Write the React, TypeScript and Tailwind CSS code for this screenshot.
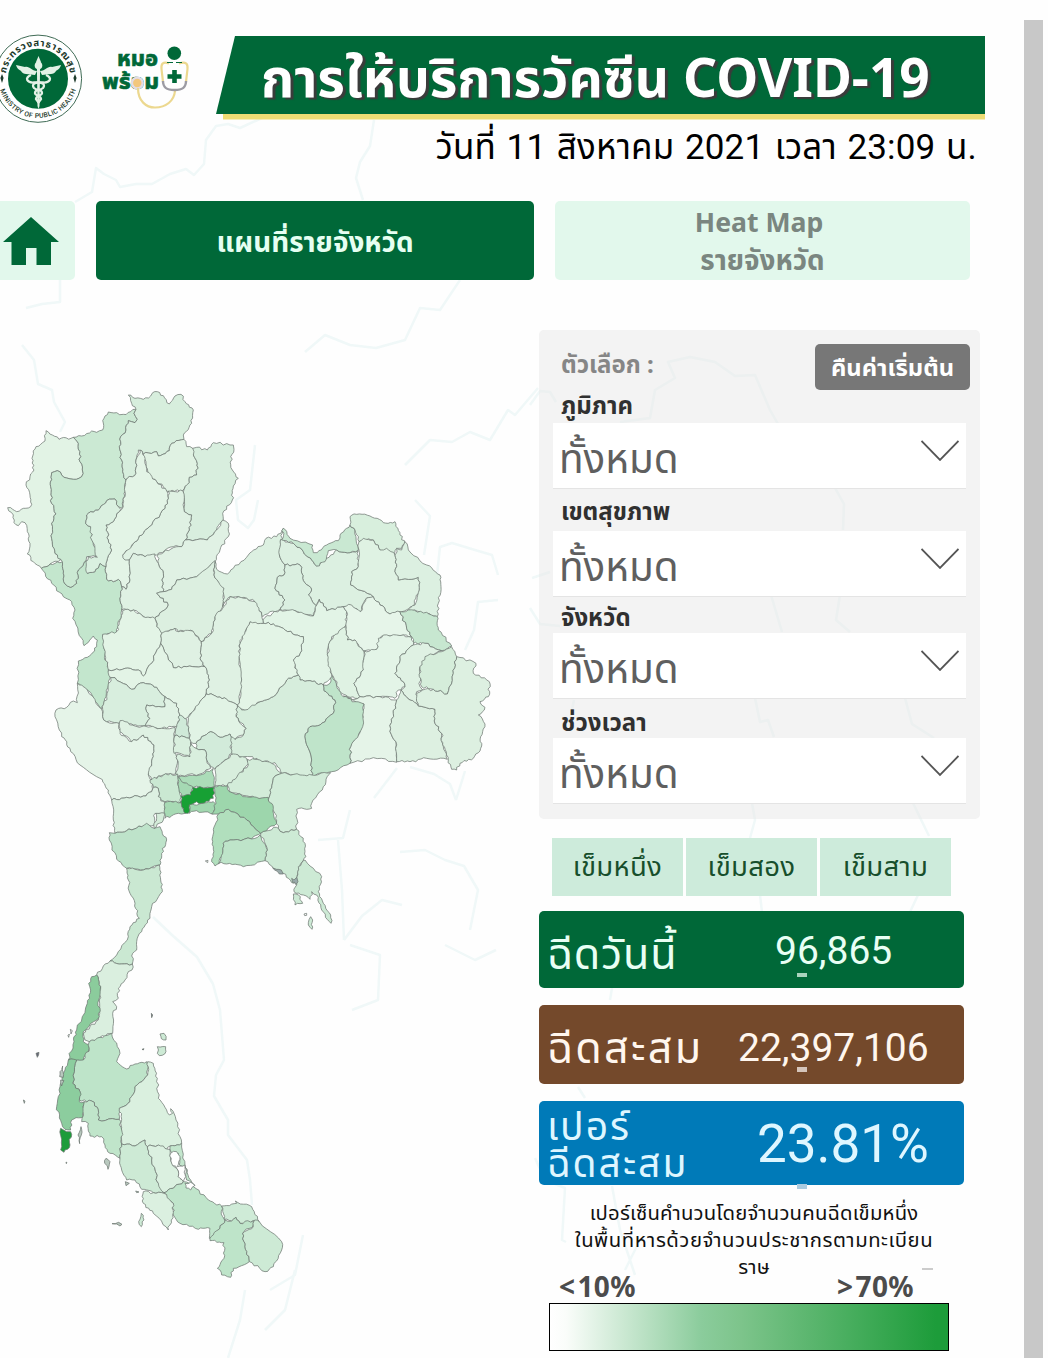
import React from 'react';

type Region = { fill: string; pts: string };
type Group = { origin: [number, number]; regions: Region[] };

// Three map units per pixel, each group has its own origin on the page
const GROUPS: Group[] = [
  {
    origin: [0, 380],
    regions: [
      // Mae Hong Son
      { fill: '#e2f3e5', pts: '138,152 157,165 177,178 220,172 235,190 240,215 240,245 247,270 245,290 220,298 200,294 185,285 172,272 155,278 152,320 155,370 168,402 155,430 157,485 165,520 182,540 150,552 124,565 100,545 82,522 90,490 82,455 75,428 65,425 55,437 42,428 40,405 23,383 50,395 70,385 92,380 90,345 78,315 90,290 102,270 96,235 108,200 135,183' },
      // Tak
      { fill: '#c3e6cd', pts: '124,565 150,552 187,545 190,580 195,612 212,622 230,610 235,570 252,548 262,540 262,580 285,575 300,550 318,560 320,598 340,605 355,598 365,620 360,655 365,690 355,740 350,760 308,765 315,825 322,860 330,895 318,950 305,988 262,930 232,910 235,843 268,828 290,800 292,780 280,768 252,797 245,775 218,715 225,690 215,665 190,650 155,610' },
      // Chiang Mai
      { fill: '#cbe9d3', pts: '220,172 245,168 275,153 290,157 308,150 312,115 325,96 350,98 370,103 392,95 408,88 402,100 412,118 405,128 385,122 378,150 362,170 358,200 365,240 368,275 378,300 372,340 366,385 355,380 345,357 320,362 300,385 260,405 257,430 272,440 278,480 290,515 288,530 260,530 252,548 235,570 230,610 212,622 195,612 190,580 187,545 165,520 157,485 155,430 168,402 155,370 152,320 155,278 172,272 185,285 200,294 220,298 245,290 247,270 240,245 240,215 235,190' },
      // Chiang Rai
      { fill: '#d7eedd', pts: '385,45 405,55 430,58 452,48 458,38 472,35 490,47 508,72 525,48 543,43 555,65 580,90 575,130 550,165 552,178 515,190 508,212 475,228 470,215 430,222 425,212 415,210 408,240 408,280 378,300 368,275 365,240 358,200 362,170 378,150 385,122 405,128 412,118 402,100 408,88 395,70' },
      // Phayao
      { fill: '#e0f2e3', pts: '430,222 470,215 475,228 508,212 515,190 552,178 560,200 578,205 588,210 580,225 592,250 590,285 568,292 568,308 548,332 500,333 490,320 470,305 450,290 438,260' },
      // Nan
      { fill: '#d8eede', pts: '578,205 590,202 622,210 640,188 700,195 702,208 692,230 697,270 715,295 700,318 697,360 668,400 670,420 650,450 622,480 556,480 568,450 575,405 553,395 550,335 568,308 568,292 590,285 592,250 580,225' },
      // Phrae
      { fill: '#dff1e3', pts: '505,333 548,332 553,395 575,405 568,450 556,480 545,500 520,500 470,525 435,530 400,520 388,540 370,542 365,528 400,490 430,460 455,435 495,385 505,355' },
      // Lampang
      { fill: '#e3f4e6', pts: '420,210 428,215 435,250 440,275 470,305 500,333 505,355 495,385 455,435 430,460 400,490 368,525 375,540 388,540 390,600 378,628 365,620 355,598 340,605 320,598 318,560 330,520 335,510 325,480 318,435 340,425 358,395 370,380 375,335 378,300 408,280 408,240' },
      // Lamphun
      { fill: '#daf0e0', pts: '345,357 355,380 362,388 358,395 340,425 318,435 325,480 335,510 330,520 318,560 300,550 285,575 262,580 258,545 265,530 292,532 275,480 272,440 257,430 260,405 300,385 320,362' },
      // Uttaradit
      { fill: '#e0f1e4', pts: '475,522 520,503 545,500 556,480 622,480 650,450 668,420 685,430 685,470 660,510 645,545 620,568 590,590 530,600 515,628 490,635 485,600 490,580 475,550' },
      // Sukhothai
      { fill: '#dff1e3', pts: '388,540 400,520 435,530 465,522 475,550 490,580 485,600 490,635 470,640 505,675 500,685 468,710 465,716 435,713 400,690 365,690 360,655 365,620 378,628 390,600' },
      // Phitsanulok
      { fill: '#dcefe0', pts: '490,635 515,628 530,600 590,590 645,542 642,585 672,625 668,680 645,710 635,760 603,785 578,753 535,755 525,745 485,760 470,740 465,716 468,710 500,685 505,675 470,640' },
    ],
  },
  {
    origin: [240, 500],
    regions: [
      // Loei
      { fill: '#dcf0e1', pts: '-75,185 -70,208 -38,222 -20,205 25,165 35,155 70,135 78,115 110,110 130,85 122,130 118,165 135,195 132,225 112,232 105,265 135,300 120,328 90,335 68,350 65,345 45,305 20,295 -30,290 -52,320 -48,265 -78,225' },
      // Udon Thani
      { fill: '#dcf0e1', pts: '122,118 160,130 190,155 215,180 230,198 260,175 290,150 330,158 355,152 355,200 335,215 332,255 345,262 400,290 375,300 362,335 330,318 310,320 260,332 238,298 230,318 205,285 215,270 188,235 180,195 135,195 118,165' },
      // Nong Bua Lamphu
      { fill: '#daefe0', pts: '135,195 180,195 188,235 215,270 205,285 230,318 220,348 190,345 165,332 120,328 135,300 105,265 112,232 132,225' },
      // Nong Khai
      { fill: '#c9e8d2', pts: '130,85 150,115 218,135 220,158 232,158 260,135 295,122 300,105 330,75 345,90 355,150 330,158 290,150 265,152 255,185 230,198 215,180 190,155 160,130 125,120' },
      // Bueng Kan
      { fill: '#d8efdd', pts: '330,75 330,50 350,43 390,48 430,68 465,65 480,105 495,130 485,145 470,145 462,165 420,150 400,120 370,120 357,125 345,90' },
      // Sakon Nakhon
      { fill: '#dff2e3', pts: '357,125 370,115 400,120 420,150 440,145 465,165 470,200 465,215 475,240 535,232 538,270 520,320 485,335 450,342 420,315 400,290 345,262 332,255 335,215 355,200' },
      // Nakhon Phanom
      { fill: '#dcf0e1', pts: '495,125 505,150 560,195 600,225 603,260 595,310 592,350 560,340 505,330 525,315 538,270 535,232 475,240 465,215 470,200 465,165 470,145 485,150' },
      // Khon Kaen
      { fill: '#e2f4e6', pts: '75,352 120,330 165,332 220,348 238,298 260,332 310,320 320,335 318,375 305,400 275,410 262,450 272,500 275,530 250,555 210,542 180,540 170,515 160,480 180,460 190,410 165,405 130,385 100,372 70,370' },
      // Kalasin
      { fill: '#e6f5e9', pts: '310,320 335,315 362,335 378,295 400,290 420,315 450,342 480,335 500,385 515,410 490,405 425,408 410,448 370,453 345,420 322,420 318,380 320,335' },
      // Mukdahan
      { fill: '#c7e7d0', pts: '480,335 505,330 560,337 590,348 595,390 635,438 605,452 555,430 520,430 515,410 500,385' },
      // Maha Sarakham
      { fill: '#dff2e3', pts: '318,380 322,420 345,420 372,455 370,510 342,550 360,590 345,595 305,580 280,530 265,490 265,435 280,410' },
      // Roi Et
      { fill: '#e3f4e7', pts: '372,453 410,448 415,415 430,405 490,405 515,412 520,435 480,470 478,490 465,520 490,545 495,560 475,570 465,595 420,590 360,590 342,550 370,510' },
      // Yasothon
      { fill: '#dff1e3', pts: '520,435 555,430 605,452 570,470 540,500 540,560 548,570 530,575 535,615 510,600 483,570 495,560 490,545 465,520 478,490 480,470' },
      // Amnat Charoen
      { fill: '#d5edda', pts: '555,470 605,455 635,440 650,470 640,520 622,582 580,568 545,560 538,530 540,500' },
      // Nakhon Ratchasima
      { fill: '#d6eddc', pts: '-8,615 5,630 60,605 100,590 140,540 175,525 180,540 210,542 250,555 252,572 285,600 280,640 240,675 210,680 195,710 215,780 215,828 205,830 125,820 105,788 70,785 30,770 0,770 -25,760 -30,702 -15,718 10,705 18,685 -12,650' },
      // Chaiyaphum
      { fill: '#e3f4e6', pts: '30,365 70,370 100,372 130,385 165,405 190,410 180,460 160,480 175,525 140,540 100,590 60,605 15,630 -8,615 -2,600 5,540 -3,470 0,430 10,400' },
      // Surin
      { fill: '#e5f4e8', pts: '310,588 345,598 360,590 420,590 470,600 460,640 450,695 468,725 470,787 400,773 330,790 332,740 362,690 372,612' },
      // Sisaket
      { fill: '#ddf0e1', pts: '483,570 510,600 535,618 585,628 585,670 605,700 610,740 622,778 560,775 510,785 470,785 468,725 450,695 460,640 470,600' },
      // Ubon Ratchathani
      { fill: '#ddf0e1', pts: '650,470 708,490 700,520 748,545 745,590 720,605 735,622 715,645 735,672 722,710 722,745 700,775 660,790 650,810 635,808 625,780 608,735 605,700 585,670 585,628 535,618 530,580 548,570 580,568 622,582 640,520' },
      // Buriram
      { fill: '#bfe4ca', pts: '250,555 270,550 278,528 290,560 310,590 345,605 372,612 368,680 332,740 330,790 275,815 215,828 215,780 195,710 210,680 240,675 280,640 285,600 252,572' },
    ],
  },
  {
    origin: [0, 600],
    regions: [
      // Kanchanaburi
      { fill: '#e5f4e8', pts: '232,250 262,270 305,328 308,350 320,365 358,370 360,400 395,425 430,405 462,435 462,455 455,490 455,510 445,525 460,550 455,575 430,588 380,592 335,600 325,570 300,535 240,495 210,445 185,410 165,350 168,330 200,322 220,303 232,308' },
      // Phetchabun
      { fill: '#dff1e3', pts: '603,125 635,100 645,50 668,25 690,-10 740,-5 765,5 785,45 790,70 750,65 735,95 720,130 717,170 725,240 718,300 712,315 680,298 640,285 618,282 628,240 615,200 600,175' },
      // Kamphaeng Phet
      { fill: '#e3f4e6', pts: '308,103 350,95 360,60 368,32 400,30 430,50 465,55 470,80 485,100 482,130 455,190 430,228 415,210 375,205 325,210 315,165' },
      // Phichit
      { fill: '#dff1e3', pts: '485,100 525,85 535,95 578,93 603,125 600,175 615,200 560,200 520,203 482,130' },
      // Nakhon Sawan
      { fill: '#e3f4e6', pts: '325,210 375,205 415,210 430,228 455,190 482,130 520,203 560,200 615,200 628,240 618,282 600,305 565,350 555,358 540,350 535,335 530,310 495,290 470,262 430,248 395,268 345,233 332,233' },
      // Uthai Thani
      { fill: '#d8eede', pts: '332,233 345,233 395,268 430,248 470,262 495,290 495,320 440,315 440,335 450,355 435,378 400,375 360,370 320,365 308,350 308,328 320,290' },
      // Chai Nat
      { fill: '#e0f2e4', pts: '495,290 530,310 535,335 540,350 530,380 485,385 435,378 450,355 440,335 440,315 495,320' },
      // Suphan Buri
      { fill: '#dff1e3', pts: '360,362 375,365 405,378 485,385 525,382 522,440 532,490 527,522 490,525 455,540 445,525 455,490 462,455 462,435 430,405 395,425 360,395' },
      // Lop Buri
      { fill: '#e1f3e5', pts: '565,352 600,305 618,282 640,285 680,298 712,315 708,350 738,385 730,405 705,418 690,402 660,412 632,395 605,410 588,430 572,425 568,415' },
      // Sing Buri
      { fill: '#cfe9d8', pts: '530,380 540,345 560,358 565,390 568,415 545,408 524,408' },
      // Ang Thong
      { fill: '#d9efde', pts: '524,408 545,408 568,415 572,435 570,470 545,462 522,460' },
      // Saraburi
      { fill: '#d2ebda', pts: '588,430 605,410 632,395 660,412 690,402 695,460 670,485 645,508 632,500 620,480 615,450 588,445' },
      // Ayutthaya
      { fill: '#d9efde', pts: '532,462 570,470 572,428 588,445 615,450 620,480 632,505 600,522 530,530' },
      // Nakhon Nayok
      { fill: '#d8eedd', pts: '645,508 670,485 700,462 740,475 748,490 710,535 685,555 645,558' },
      // Nakhon Pathom
      { fill: '#cae8d2', pts: '450,540 490,525 533,522 538,575 543,608 495,605 475,590 475,565 460,562' },
      // Ratchaburi
      { fill: '#dcf0e1', pts: '335,600 380,592 430,588 455,575 460,562 475,565 475,590 495,610 495,640 465,640 463,675 425,680 380,692 345,700 340,660' },
      // Phetchaburi
      { fill: '#bee3ca', pts: '328,698 345,700 380,692 425,680 440,670 463,685 480,680 500,720 485,760 480,795 430,810 380,805 350,778 328,720' },
      // Pathum Thani
      { fill: '#abdcb8', pts: '535,530 600,525 640,505 643,560 580,562 540,545' },
      // Nonthaburi
      { fill: '#a5d9b3', pts: '535,530 545,545 580,562 575,590 545,590 538,575' },
      // Samut Sakhon
      { fill: '#a7dab4', pts: '495,607 543,608 555,640 535,640 495,655' },
      // Samut Songkhram
      { fill: '#d5edda', pts: '468,640 495,640 490,660 463,685' },
      // Samut Prakan
      { fill: '#a2d8b0', pts: '568,615 605,610 640,605 648,625 640,642 590,632 568,640' },
      // Bangkok
      { fill: '#17a034', pts: '543,588 572,585 578,562 643,562 640,595 605,610 590,605 568,615 565,640 555,640 543,605' },
    ],
  },
  {
    origin: [140, 740],
    regions: [
      // Prachin Buri
      { fill: '#d3ecd9', pts: '262,135 290,112 325,75 322,58 360,60 395,70 425,100 400,115 390,150 385,178 365,175 330,170 268,155' },
      // Sa Kaeo
      { fill: '#d2ecd9', pts: '425,100 480,105 515,105 572,98 550,140 515,190 515,205 470,208 470,268 430,278 415,265 405,220 395,205 385,178 390,150 400,115' },
      // Chanthaburi
      { fill: '#cdead5', pts: '362,280 410,262 415,265 430,278 470,268 495,310 498,350 480,375 472,415 462,430 430,400 400,385 375,362 382,330' },
      // Chachoengsao
      { fill: '#9dd6ac', pts: '222,140 262,138 268,155 330,172 385,172 400,205 410,250 362,280 320,240 265,208 235,222 215,222 228,190' },
      // Chon Buri
      { fill: '#b1dfbd', pts: '235,222 265,208 320,240 362,280 335,297 270,300 250,310 248,340 238,370 225,378 215,365 220,320 218,290 225,255' },
      // Rayong
      { fill: '#bee4c9', pts: '250,310 270,300 335,297 360,285 382,330 375,362 310,380 260,372 235,370 248,340' },
      // Trat
      { fill: '#cdead5', pts: '495,360 545,410 535,455 550,490 572,525 573,550 545,510 530,465 515,455 510,478 490,465 462,455 470,420 475,380' },
      { fill: '#cdead5', pts: '460,462 475,465 488,490 465,495' },
      { fill: '#cdead5', pts: '505,548 512,530 518,540 516,568 505,555' },
      { fill: '#9aa', pts: '455,415 462,420 470,412 474,425 468,434 463,426 458,428' },
      { fill: '#9aa', pts: '398,384 410,388 424,390 430,402 418,402 412,394' },
      { fill: '#fff', pts: '492,522 500,520 500,526 494,527' },
      { fill: '#fff', pts: '196,363 204,361 203,368' },
    ],
  },
  {
    origin: [0, 860],
    regions: [
      // Prachuap Khiri Khan
      { fill: '#cae8d2', pts: '380,25 430,30 478,15 482,60 487,95 455,140 450,175 425,215 410,245 410,270 398,280 397,312 365,312 330,303 350,285 385,230 390,200 418,175 405,130 390,100 385,60' },
      // Chumphon
      { fill: '#daefdf', pts: '330,303 365,312 397,312 396,330 385,335 375,360 355,385 355,415 338,425 350,440 338,460 338,520 300,532 268,545 255,540 250,520 270,500 295,480 298,420 302,380 290,345 310,318' },
      // Ranong
      { fill: '#8bcc9c', pts: '290,345 302,380 296,420 298,470 250,515 250,545 268,555 265,575 250,600 205,600 222,545 230,510 262,430 272,390 266,370 275,350' },
      { fill: '#cdead5', pts: '480,522 492,520 498,540 484,536' },
      { fill: '#cdead5', pts: '472,560 497,560 494,582 478,587 472,580' },
      { fill: '#667', pts: '454,460 458,465 455,473' },
      { fill: '#667', pts: '108,580 117,577 112,592' },
      { fill: '#fff', pts: '211,508 217,512 213,522' },
      { fill: '#fff', pts: '204,526 208,522 206,532' },
      { fill: '#667', pts: '426,568 432,566 430,570' },
    ],
  },
  {
    origin: [20, 1020],
    regions: [
      // Surat Thani
      { fill: '#bee4c9', pts: '275,40 300,100 290,125 320,147 345,132 380,125 383,165 345,200 330,245 298,265 298,298 235,300 232,262 215,243 178,240 180,215 158,190 170,120 190,120 208,85 208,65 240,52' },
      // Phang Nga
      { fill: '#8ccd9e', pts: '145,120 170,120 158,190 180,215 178,245 193,245 190,290 155,300 152,330 135,328 125,310 110,260 120,200 135,150' },
      // Phuket
      { fill: '#1d9c3a', pts: '122,325 140,335 152,335 150,375 132,397 122,390' },
      // Nakhon Si Thammarat
      { fill: '#daf0df', pts: '383,125 400,130 412,175 415,235 435,262 448,285 458,280 452,266 466,290 480,350 485,370 450,378 440,390 415,375 382,380 375,360 345,378 305,372 305,298 298,265 330,245 345,200 383,165' },
      // Krabi
      { fill: '#c0e5ca', pts: '193,245 215,243 232,262 235,300 298,298 305,330 305,372 300,415 270,400 255,375 245,350 210,348 205,310 185,305' },
      // Trang
      { fill: '#cdead5', pts: '305,372 345,378 375,360 382,380 395,420 415,490 432,520 400,518 365,508 345,480 320,480 305,450 300,415' },
      // Phatthalung
      { fill: '#dbf0e0', pts: '382,380 415,375 450,388 452,420 470,445 475,470 490,485 465,500 432,518 415,490 395,420' },
      // Songkhla
      { fill: '#c3e6cd', pts: '450,378 485,370 495,435 512,480 525,497 500,480 495,440 478,435 475,400 452,395' },
      { fill: '#c0e5cb', pts: '432,518 465,500 490,485 520,500 565,540 605,558 608,590 615,600 600,625 575,655 568,655 570,625 535,628 480,610 460,585 460,550 445,540' },
      { fill: '#fff', pts: '452,400 470,395 480,410 472,440 495,435 497,470 490,485 475,470 470,445 455,430' },
      { fill: '#fff', pts: '495,490 512,487 524,497 512,510 498,504' },
      // Satun
      { fill: '#dbf0e0', pts: '370,515 400,518 432,520 460,550 458,585 445,630 400,580 370,550' },
      // Pattani
      { fill: '#cfebd7', pts: '605,558 650,550 646,543 695,560 718,605 700,602 690,615 660,610 648,592 635,603 612,598' },
      // Yala
      { fill: '#bee4c9', pts: '615,600 635,603 648,592 660,610 700,602 700,615 668,640 675,680 688,725 640,745 632,772 605,765 592,745 612,715 612,668 570,662 570,655 600,625' },
      // Narathiwat
      { fill: '#cdead5', pts: '704,600 718,605 785,665 785,690 760,740 735,755 688,725 675,680 668,640 700,620' },
      { fill: '#cdead5', pts: '364,580 372,600 364,620 356,605' },
      { fill: '#b8c8be', pts: '183,320 184,345 179,371 174,345' },
      { fill: '#b8c8be', pts: '258,415 270,425 264,448 254,430' },
      { fill: '#b8c8be', pts: '128,138 130,172 119,170 120,155' },
      { fill: '#b8c8be', pts: '122,180 132,182 125,198' },
      { fill: '#b8c8be', pts: '316,485 328,490 318,497' },
      { fill: '#b8c8be', pts: '276,611 296,607 306,613 300,618 290,612' },
      { fill: '#b8c8be', pts: '10,240 15,243 13,250' },
      { fill: '#b8c8be', pts: '138,426 141,428 139,431' },
      { fill: '#b8c8be', pts: '347,513 357,516 350,518' },
    ],
  },
];

const COUNTRY_LINES = [
  'M75 202 L92 192 L96 168 L104 174 L116 180 L120 187 L136 184 L152 184 L170 174 L186 169 L194 175 L204 164 L206 140 L216 126 L228 124 L240 128 L262 118',
  'M374 120 L370 146 L360 162 L356 178 L363 200',
  'M60 280 L60 302 L42 304 L26 308 M22 345 L34 360 L38 384 L52 390 L54 402 L65 422 L60 432',
  'M460 280 L440 310 L420 308 L405 340 L376 348 L350 345 L325 335 L305 352 M538 388 L515 415 L508 410 L490 440 L470 432 L452 442 L430 440 L405 465',
  'M255 445 L250 490 L236 500 L238 520 L248 528 L254 520 L258 500 M415 500 L430 516 L424 555 M437 575 L440 547 L452 543 L475 550 L492 555 L498 575',
  'M498 600 L478 602 L474 630 L465 650',
  'M530 405 L540 391 L550 392 L556 402 M620 422 L650 418 L655 390 L675 378 L668 362 L690 357 L715 362 L735 376 L755 375 L770 410 L778 424',
  'M532 578 L550 572 M530 608 L540 624 L560 626 M835 488 L844 504 L843 530 M771 595 L782 632 M840 595 L836 620 L850 632',
  'M574 700 L570 720 M755 698 L760 722 L768 720 L774 737 M905 698 L912 724 L934 738 M752 803 L755 820 L750 838 M913 803 L929 836 M760 895 L762 912 M918 895 L910 912',
  'M397 768 L374 798 M410 767 L434 774 L450 784 L456 800 M456 800 L465 771 M350 810 L343 838 L318 840 M338 840 L342 890 L344 940',
  'M153 917 L172 935 L197 957 L213 984 L220 1010 L224 1060 L216 1075 L214 1096 L228 1120 L228 1135 L247 1160 L250 1180 L252 1205',
  'M344 940 L362 916 L382 900 L402 905 M400 852 L425 850 L445 860 L464 866 L478 890 L470 930',
  'M303 1235 L295 1275 L270 1290 M295 1270 L285 1310 L265 1330 M245 1290 L240 1320 L228 1358',
  'M612 988 L610 1000 M578 1087 L585 1098 M535 1158 L545 1180 L565 1188 L562 1240 L566 1242 M612 1186 L620 1230 L635 1275 M625 1270 L640 1240',
  'M350 945 L380 955 L378 1000 L352 1010 M445 945 L475 960 L496 950',
];

// Small repeatable value in -0.5..0.5 from a point
const noise = (x: number, y: number) => {
  const v = Math.sin(x * 12.9898 + y * 78.233) * 43758.5453;
  return v - Math.floor(v) - 0.5;
};

// Breaks straight edges up so that the borders look natural. The offset only
// depends on the two end points, so neighbours get the same border.
const roughen = (pts: string) => {
  const p = pts.split(' ').map((s) => s.split(',').map(Number));
  const out: string[] = [];
  p.forEach((a, i) => {
    const b = p[(i + 1) % p.length];
    out.push(`${a[0]},${a[1]}`);
    const len = Math.hypot(b[0] - a[0], b[1] - a[1]);
    if (len < 14) return;
    const flip = a[0] > b[0] || (a[0] === b[0] && a[1] > b[1]);
    const [s, e] = flip ? [b, a] : [a, b];
    const n = Math.min(6, Math.floor(len / 7));
    const mid: string[] = [];
    for (let k = 1; k < n; k++) {
      const t = k / n;
      const x = s[0] + (e[0] - s[0]) * t;
      const y = s[1] + (e[1] - s[1]) * t;
      const d = noise(x, y) * 7.5;
      mid.push(`${(x - ((e[1] - s[1]) / len) * d).toFixed(1)},${(y + ((e[0] - s[0]) / len) * d).toFixed(1)}`);
    }
    out.push(...(flip ? mid.reverse() : mid));
  });
  return out.join(' ');
};

const ProvinceMap = () => (
  <svg width="500" height="920" viewBox="0 380 500 920" className="shrink-0">
    {GROUPS.map((g, i) => (
      <g key={i} transform={`translate(${g.origin[0]} ${g.origin[1]}) scale(0.33333)`}>
        {g.regions.map((r, j) => (
          <polygon key={j} points={roughen(r.pts)} fill={r.fill} stroke="#6c7671" strokeWidth="2.2" strokeLinejoin="round" />
        ))}
      </g>
    ))}
  </svg>
);

const Seal = () => (
  <svg width="84" height="92" viewBox="0 31 84 92" className="shrink-0">
    <defs>
      <path id="sealTop" d="M5.5 77.5 A32.5 32.5 0 0 1 70.5 77.5" />
      <path id="sealBottom" d="M-1.500 77.5 A39.5 39.5 0 0 0 77.5 77.5" />
    </defs>
    <circle cx="38" cy="77.7" r="43.6" fill="#fff" stroke="#3f6b55" strokeWidth="1" />
    <circle cx="38" cy="77.7" r="30" fill="#006838" />
    <text fill="#1d3a2b" fontSize="9.5" fontWeight="700" fontFamily="Noto Sans Thai, Noto Sans, sans-serif">
      <textPath href="#sealTop" startOffset="50%" textAnchor="middle" textLength="92">กระทรวงสาธารณสุข</textPath>
    </text>
    <text fill="#1d3a2b" fontSize="6.8" fontWeight="500" fontFamily="Roboto, sans-serif">
      <textPath href="#sealBottom" startOffset="50%" textAnchor="middle" textLength="101">MINISTRY OF PUBLIC HEALTH</textPath>
    </text>
    <path d="M2 73 l1.6 4 l-1.6 5 l-1.6 -5z M75 73 l1.6 4 l-1.6 5 l-1.6 -5z" fill="#1d3a2b" />
    {/* winged staff */}
    <g fill="#e3f1e6">
      <path d="M37 70 C31 70 30 65 25 66 L16 64 C17 68 20 69 21 70 C22 72 24 73 26 73 L35 74 Z" />
      <path d="M40 70 C46 70 47 65 52 66 L61 64 C60 68 57 69 56 70 C55 72 53 73 51 73 L42 74 Z" />
      <path d="M38.5 55 L41 61 L40 64 H37 L36 61 Z" />
      <circle cx="38.5" cy="64.5" r="3.8" />
      <path d="M36.9 66 H40.1 L39.5 105 L38.5 108 L37.5 105 Z" />
    </g>
    <g fill="none" stroke="#e3f1e6" strokeWidth="2.3">
      <path d="M31 74 C24 77 27 82 34 81.5 C42 81 46 83 43 87 C40 90 35 88 35 92 C35 95 41 94 41 98 L38 102" />
      <path d="M46 74 C53 77 50 82 43 81.5 C35 81 31 83 34 87 C37 90 42 88 42 92 C42 95 36 94 36 98 L39 102" />
    </g>
  </svg>
);

const MorPromLogo = () => (
  <svg width="90" height="68" viewBox="101 44 90 68" className="shrink-0">
    <g fill="#006838" stroke="#006838" strokeWidth="0.5" fontFamily="Noto Sans Thai, Noto Sans, sans-serif" fontWeight="800">
      <text x="117" y="66" fontSize="22" textLength="41" lengthAdjust="spacingAndGlyphs">หมอ</text>
      <text x="102" y="88.500" fontSize="21" textLength="57" lengthAdjust="spacingAndGlyphs">พร้อม</text>
    </g>
    <circle cx="174.3" cy="53.3" r="6.8" fill="#006838" />
    <circle cx="137.3" cy="83" r="5.4" fill="#f3c77c" stroke="#e2dce4" strokeWidth="2.4" />
    <path d="M138 88 C138 101 146 107.500 155 107.500 C166 107.500 174 101 175 91" fill="none" stroke="#ecd88f" strokeWidth="2.200" />
    <path d="M169 63.500 C163 61 161 64 161.500 69 L163 82 M179 63.500 C186 61 188 64 187.500 69 L186 82" fill="none" stroke="#ecd88f" strokeWidth="2.200" />
    <path d="M163 81 C163 88 167 90 174.500 90 C182 90 186 88 186 81" fill="none" stroke="#9c9ba3" strokeWidth="2.400" />
    <path d="M172.200 70 h4.600 v4.200 h4.700 v4.600 h-4.700 v4.200 h-4.600 v-4.200 h-4.700 v-4.600 h4.700z" fill="#006838" />
    <path d="M167 62.500 h6 M176 62.500 h6" stroke="#006838" strokeWidth="1.200" />
  </svg>
);

const FILTERS = [
  { label: 'ภูมิภาค', gap: 'h-[33px] pb-[2px]' },
  { label: 'เขตสุขภาพ', gap: 'h-[42px] pb-[4px]' },
  { label: 'จังหวัด', gap: 'h-[36px]' },
  { label: 'ช่วงเวลา', gap: 'h-[39px]' },
];

const SelectBox = () => (
  <button className="flex w-[413px] h-[66px] shrink-0 justify-between bg-white border-b border-[#e4e4e4] pl-[6px] pr-[7px]">
    <span className="text-[40.4px] leading-[74px] text-[#5f5f5f] whitespace-nowrap">ทั้งหมด</span>
    <svg width="38" height="22" viewBox="0 0 38 22" className="mt-[17px]">
      <path d="M0.500 1 L19 20 L37.500 1" fill="none" stroke="#555" strokeWidth="1.800" />
    </svg>
  </button>
);

const App = () => {
  return (
    <div className="relative flex w-[1048px] h-[1358px] overflow-hidden bg-[#fefefe] font-['Roboto','Noto_Sans_Thai','Noto_Sans',sans-serif]">
      <svg className="absolute left-0 top-0" width="1024" height="1358" fill="none" stroke="#f0f8f8" strokeWidth="2.500" strokeLinejoin="round">
        {COUNTRY_LINES.map((d) => <path key={d} d={d} />)}
      </svg>

      <main className="relative w-[1024px] shrink-0">
        {/* Header */}
        <header className="flex h-[124px] pt-[32px]">
          <Seal />
          <div className="pl-[17px] pt-[12px]"><MorPromLogo /></div>
          <div className="relative ml-[25px] mt-[4px] w-[769px] h-[84px]">
            <svg width="769" height="84" className="absolute inset-0">
              <path d="M7 75 H769 V83.500 H7z" fill="#eddc74" />
              <path d="M19 0 H769 V78 H0z" fill="#006838" />
            </svg>
            <h1 className="relative pl-[45px] text-[53.2px] leading-[82px] font-bold text-white whitespace-nowrap font-['Noto_Sans','Noto_Sans_Thai',sans-serif] [text-shadow:3px_2px_1px_#3b3b3b]">
              การให้บริการวัคซีน COVID-19
            </h1>
          </div>
        </header>
        <p className="h-[77px] pr-[47px] text-right text-[35px] leading-[47px] text-black whitespace-nowrap tracking-[0.15px] [word-spacing:1.8px]">
          วันที่ 11 สิงหาคม 2021 เวลา 23:09 น.
        </p>

        {/* Tabs */}
        <nav className="flex h-[79px] font-bold text-[27.8px] font-['Noto_Sans','Noto_Sans_Thai',sans-serif]">
          <button className="w-[75px] rounded-r-[5px] bg-[#e2f8ec]">
            <svg width="75" height="79" viewBox="0 0 75 79">
              <path d="M31 16 L59 41 H51 V64 H36.500 V47 H26 V64 H11.500 V41 H3z" fill="#006838" />
            </svg>
          </button>
          <button className="ml-[21px] w-[438px] rounded-[5px] bg-[#006838] text-[#e6fff2] leading-[80px]">แผนที่รายจังหวัด</button>
          <button className="ml-[21px] w-[415px] rounded-[5px] bg-[#e2f8ec] text-[#7a8680] leading-[37px]">
            <span className="block pt-[1px] pr-[7px] text-[26.6px]">Heat Map</span>
            <span className="block">รายจังหวัด</span>
          </button>
        </nav>

        <div className="flex mt-[50px]">
          <div className="w-[539px] pt-[50px]">
            <ProvinceMap />
          </div>

          <div className="w-[441px]">
            {/* Filters */}
            <section className="relative h-[489px] rounded-[5px] bg-[#e7e8e8]/50 pl-[14px] pt-[14px] font-bold font-['Noto_Sans','Noto_Sans_Thai',sans-serif]">
              <div className="flex justify-between pl-[8px] pr-[10px] h-[46px]">
                <span className="text-[24px] leading-[39px] text-[#868686]">ตัวเลือก :</span>
                <button className="w-[155px] rounded-[5px] bg-[#777] text-white text-[23.8px] leading-[46px] whitespace-nowrap">คืนค่าเริ่มต้น</button>
              </div>
              {FILTERS.map((f) => (
                <React.Fragment key={f.label}>
                  <div className={`${f.gap} flex items-end pl-[8px] text-[24px] leading-[32px] text-[#303030]`}>{f.label}</div>
                  <div className="font-normal font-['Roboto','Noto_Sans_Thai',sans-serif]"><SelectBox /></div>
                </React.Fragment>
              ))}
            </section>

            {/* Dose tabs */}
            <div className="flex gap-[3px] pl-[13px] mt-[19px] h-[58px] text-[27.5px] tracking-[0.3px] leading-[54px] text-[#174f2c]">
              <button className="w-[131px] bg-[#cdebdb]">เข็มหนึ่ง</button>
              <button className="w-[131px] bg-[#cdebdb]">เข็มสอง</button>
              <button className="w-[131px] bg-[#cdebdb]">เข็มสาม</button>
            </div>

            {/* Totals */}
            <div className="mt-[15px] flex w-[425px] h-[77px] rounded-[5px] bg-[#006838] pl-[8px] text-[#e8fff4]">
              <span className="w-[228px] text-[43px] tracking-[0.8px] leading-[86px] whitespace-nowrap">ฉีดวันนี้</span>
              <span className="relative text-[39px] leading-[81px]">
                96,865
                <i className="absolute left-[22px] top-[62px] w-[10px] h-[4px] bg-[#a9d3bd]" />
              </span>
            </div>
            <div className="mt-[17px] flex w-[425px] h-[79px] rounded-[5px] bg-[#74492b] pl-[8px] text-[#fff6ee]">
              <span className="w-[191px] text-[43px] tracking-[2.3px] leading-[87px] whitespace-nowrap">ฉีดสะสม</span>
              <span className="relative text-[39px] leading-[86px]">
                22,397,106
                <i className="absolute left-[59px] top-[62px] w-[10px] h-[5px] bg-[#d5c5bb]" />
              </span>
            </div>
            <div className="mt-[17px] flex w-[425px] h-[84px] rounded-[5px] bg-[#007ab8] pl-[8px] text-[#def6ff]">
              <span className="w-[210px] pt-[8px] text-[39px] tracking-[2px] leading-[37px] whitespace-nowrap">เปอร์<br />ฉีดสะสม</span>
              <span className="relative text-[53px] leading-[86px]">
                23.81%
                <i className="absolute left-[40px] top-[83px] w-[10px] h-[5px] bg-[#aacbe0]" />
              </span>
            </div>

            <div className="relative w-[430px] h-[86px] pt-[15px] text-center text-[20.3px] leading-[27px] tracking-[0.2px] text-[#111] whitespace-nowrap">
              เปอร์เซ็นคำนวนโดยจำนวนคนฉีดเข็มหนึ่ง<br />
              <span className="tracking-[0.55px]">ในพื้นที่หารด้วยจำนวนประชากรตามทะเบียน</span><br />
              ราษ
              <i className="absolute left-[383px] top-[83px] w-[11px] h-[2px] bg-[#ccc]" />
            </div>

            {/* Legend */}
            <div className="flex justify-between w-[375px] h-[32px] pl-[20px] text-[28px] tracking-[0.4px] leading-[30px] font-bold text-[#4c4c4c] font-['Noto_Sans',sans-serif]">
              <span><span className="mr-[2px]">&lt;</span>10%</span>
              <span><span className="mr-[2px]">&gt;</span>70%</span>
            </div>
            <div className="ml-[10px] w-[400px] h-[48px] border border-black bg-[linear-gradient(90deg,#fff_0%,#fafdfa_4%,#8bcc9c_38%,#7dc48b_48%,#1d9c3a_97%)]" />
          </div>
        </div>
      </main>

      <div className="relative mt-[20px] w-[19px] bg-[#c8c8c8]" />
    </div>
  );
};

export default App;
